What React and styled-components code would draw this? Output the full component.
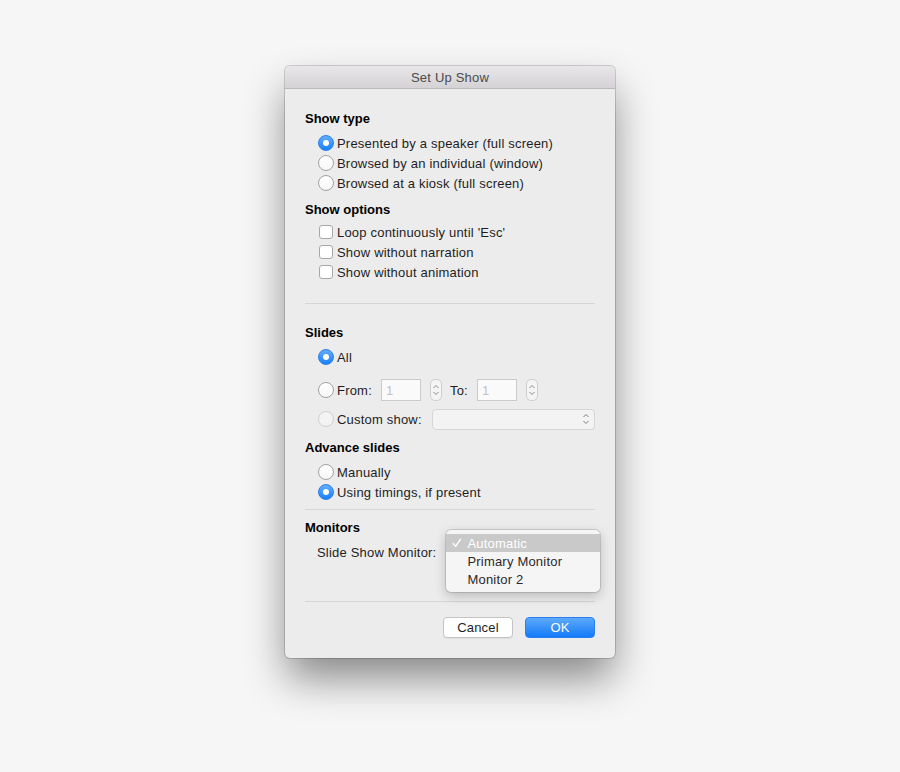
import React from "react";
import styled, { createGlobalStyle } from "styled-components";

const GlobalStyle = createGlobalStyle`
  html, body {
    margin: 0;
    padding: 0;
    background: #f6f6f6;
  }
  body {
    font-family: "Liberation Sans", Arial, sans-serif;
    font-size: 13px;
    color: #1e1e1e;
  }
`;

const Page = styled.div`
  min-height: 772px;
  box-sizing: border-box;
  padding-top: 66px;
  display: flex;
  justify-content: center;
  align-items: flex-start;
`;

const Window = styled.div`
  width: 330px;
  background: #ececec;
  border-radius: 5px;
  box-shadow: 0 0 0 1px rgba(0, 0, 0, 0.16), 0 22px 42px -2px rgba(0, 0, 0, 0.45);
`;

const TitleBar = styled.div`
  height: 21px;
  padding-top: 1px;
  border-bottom: 1px solid #b9b9b9;
  border-radius: 5px 5px 0 0;
  background: linear-gradient(#e9e7e9, #d4d2d4);
  color: #4b4b4b;
  letter-spacing: 0.2px;
  display: flex;
  align-items: center;
  justify-content: center;
`;

const Body = styled.div`
  padding: 19px 20px 20px;
  display: flex;
  flex-direction: column;
`;

const Heading = styled.div`
  font-weight: 700;
  line-height: 18px;
  padding-top: 2px;
  color: #000;
  margin-top: ${({ $top }) => $top || 0}px;
`;

const Options = styled.div`
  display: flex;
  flex-direction: column;
  padding-left: ${({ $indent }) => $indent}px;
  margin-top: ${({ $top }) => $top || 0}px;
`;

const Row = styled.div`
  display: flex;
  align-items: center;
  height: ${({ $h }) => $h || 20}px;
  margin-top: ${({ $top }) => $top || 0}px;
  gap: ${({ $gap }) => ($gap === undefined ? 3 : $gap)}px;
  letter-spacing: 0.2px;
  white-space: nowrap;
`;

const RadioDot = styled.span`
  width: 16px;
  height: 16px;
  box-sizing: border-box;
  border-radius: 50%;
  flex: none;
  display: flex;
  align-items: center;
  justify-content: center;
  border: 1px solid ${({ $on, $off }) => ($on ? "#2b7fe6" : $off ? "#d0d0d0" : "#a2a2a2")};
  background: ${({ $on, $off }) =>
    $on
      ? "linear-gradient(#62aefb, #1a80fa)"
      : $off
      ? "#f3f3f3"
      : "linear-gradient(#ffffff, #f7f7f7)"};

  &::after {
    content: "";
    display: ${({ $on }) => ($on ? "block" : "none")};
    width: 6px;
    height: 6px;
    border-radius: 50%;
    background: #fff;
  }
`;

const CheckBox = styled.span`
  width: 14px;
  height: 14px;
  box-sizing: border-box;
  flex: none;
  border: 1px solid #a8a8a8;
  border-radius: 3px;
  background: #fff;
  margin-right: 1px;
`;

const Divider = styled.div`
  height: 1px;
  background: #d6d6d6;
  margin-top: ${({ $top }) => $top}px;
`;

const NumberField = styled.div`
  width: 40px;
  height: 22px;
  box-sizing: border-box;
  border: 1px solid #cbcbcb;
  background: #fafafa;
  color: #c2c2c2;
  padding-left: 4px;
  display: flex;
  align-items: center;
  margin-left: 6px;
`;

const Stepper = styled.div`
  width: 12px;
  height: 22px;
  box-sizing: border-box;
  border: 1px solid #cfcfcf;
  border-radius: 5px;
  background: #f4f4f4;
  margin-left: 6px;
  margin-right: 5px;
  display: flex;
  align-items: center;
  justify-content: center;
`;

const SelectBox = styled.div`
  flex: 1;
  height: 21px;
  box-sizing: border-box;
  margin-left: 7px;
  border: 1px solid #d6d6d6;
  border-radius: 4px;
  background: #f3f3f3;
  display: flex;
  align-items: center;
  justify-content: flex-end;
  padding-right: 3px;
`;

const MenuAnchor = styled.div`
  position: relative;
  align-self: stretch;
  margin-left: 10px;
`;

const Menu = styled.div`
  position: absolute;
  top: -12px;
  left: 0;
  width: 154px;
  box-sizing: border-box;
  padding: 4px 0;
  background: #f5f5f5;
  border-radius: 5px;
  box-shadow: 0 0 0 1px rgba(0, 0, 0, 0.12), 0 4px 12px rgba(0, 0, 0, 0.22);
`;

const MenuItem = styled.div`
  height: 18px;
  display: flex;
  align-items: center;
  padding-left: 21px;
  position: relative;
  color: ${({ $active }) => ($active ? "#fff" : "#2a2a2a")};
  background: ${({ $active }) => ($active ? "#c9c9c9" : "transparent")};
  letter-spacing: 0.2px;
`;

const CheckMark = styled.svg`
  position: absolute;
  left: 6px;
  top: 4px;
`;

const Buttons = styled.div`
  display: flex;
  justify-content: flex-end;
  gap: 12px;
  margin-top: 15px;
`;

const Button = styled.div`
  width: 70px;
  height: 21px;
  box-sizing: border-box;
  border-radius: 4px;
  display: flex;
  align-items: center;
  justify-content: center;
  letter-spacing: 0.2px;
  ${({ $primary }) =>
    $primary
      ? `background: linear-gradient(#5eaafb, #137af8);
         color: #fff;
         border: 1px solid #2a7ef0;`
      : `background: #fff;
         color: #1e1e1e;
         border: 1px solid #c4c4c4;
         box-shadow: 0 1px 0 rgba(0,0,0,0.05);`}
`;

const Chevrons = ({ color = "#8a8a8a" }) => (
  <svg width="10" height="18" viewBox="0 0 10 18">
    <path d="M2.5 7 L5 4.5 L7.5 7" fill="none" stroke={color} strokeWidth="1" />
    <path d="M2.5 11 L5 13.5 L7.5 11" fill="none" stroke={color} strokeWidth="1" />
  </svg>
);

const Radio = ({ on, off, children }) => (
  <Row>
    <RadioDot $on={on} $off={off} />
    {children}
  </Row>
);

const Check = ({ children }) => (
  <Row $gap={3}>
    <CheckBox />
    {children}
  </Row>
);

export default function App() {
  return (
    <Page>
      <GlobalStyle />
      <Window>
        <TitleBar>Set Up Show</TitleBar>
        <Body>
          <Heading>Show type</Heading>
          <Options $indent={13} $top={5}>
            <Radio on>Presented by a speaker (full screen)</Radio>
            <Radio>Browsed by an individual (window)</Radio>
            <Radio>Browsed at a kiosk (full screen)</Radio>
          </Options>

          <Heading $top={6}>Show options</Heading>
          <Options $indent={14} $top={3}>
            <Check>Loop continuously until 'Esc'</Check>
            <Check>Show without narration</Check>
            <Check>Show without animation</Check>
          </Options>

          <Divider $top={21} />

          <Heading $top={18}>Slides</Heading>
          <Options $indent={13} $top={5}>
            <Radio on>All</Radio>
            <Row $h={22} $top={12}>
              <RadioDot />
              From:
              <NumberField>1</NumberField>
              <Stepper>
                <Chevrons />
              </Stepper>
              To:
              <NumberField>1</NumberField>
              <Stepper>
                <Chevrons />
              </Stepper>
            </Row>
            <Row $h={22} $top={7}>
              <RadioDot $off />
              Custom show:
              <SelectBox>
                <Chevrons color="#7d7d7d" />
              </SelectBox>
            </Row>
          </Options>

          <Heading $top={7}>Advance slides</Heading>
          <Options $indent={13} $top={5}>
            <Radio>Manually</Radio>
            <Radio on>Using timings, if present</Radio>
          </Options>

          <Divider $top={7} />

          <Heading $top={7}>Monitors</Heading>
          <Options $indent={12} $top={5}>
            <Row $gap={0}>
              Slide Show Monitor:
              <MenuAnchor>
                <Menu>
                  <MenuItem $active>
                    <CheckMark width="10" height="10" viewBox="0 0 10 10">
                      <path
                        d="M1.2 5.6 L3.6 8.4 L8.6 1.2"
                        fill="none"
                        stroke="#fff"
                        strokeWidth="1.4"
                        strokeLinecap="round"
                        strokeLinejoin="round"
                      />
                    </CheckMark>
                    Automatic
                  </MenuItem>
                  <MenuItem>Primary Monitor</MenuItem>
                  <MenuItem>Monitor 2</MenuItem>
                </Menu>
              </MenuAnchor>
            </Row>
          </Options>

          <Divider $top={39} />

          <Buttons>
            <Button>Cancel</Button>
            <Button $primary>OK</Button>
          </Buttons>
        </Body>
      </Window>
    </Page>
  );
}
